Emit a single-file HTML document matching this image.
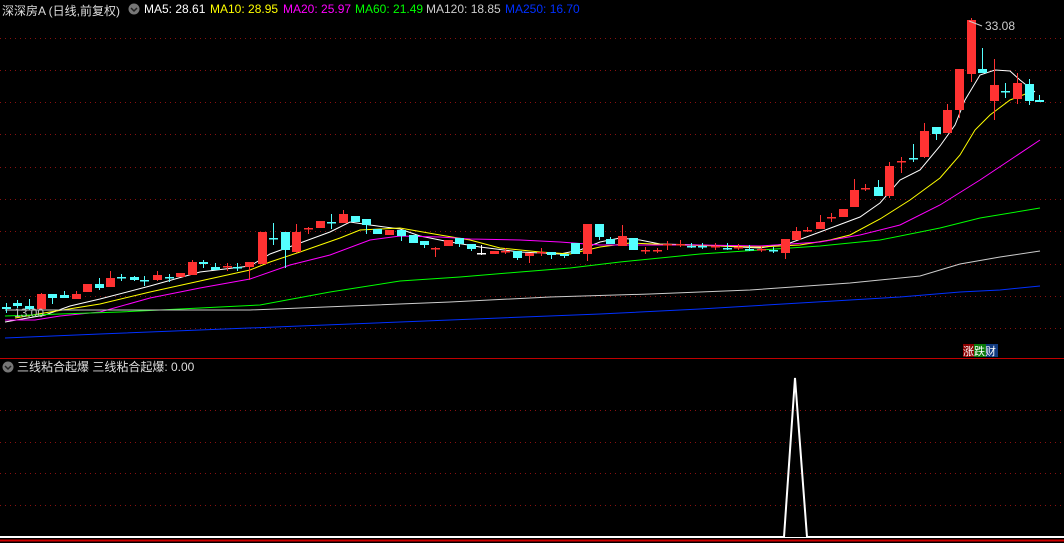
<!DOCTYPE html>
<html><head><meta charset="utf-8"><style>
html,body{margin:0;padding:0;background:#000;width:1064px;height:543px;overflow:hidden}
.t{position:absolute;font:12px "Liberation Sans","Noto Sans CJK SC",sans-serif;white-space:nowrap;top:2px}
</style></head><body>
<svg id="s" width="1064" height="543" style="position:absolute;left:0;top:0" xmlns="http://www.w3.org/2000/svg">
<g stroke="#8a1010" stroke-dasharray="1,4" stroke-width="1">
<line x1="0" y1="38.5" x2="1064" y2="38.5"/><line x1="0" y1="70.5" x2="1064" y2="70.5"/><line x1="0" y1="102.5" x2="1064" y2="102.5"/><line x1="0" y1="134.5" x2="1064" y2="134.5"/><line x1="0" y1="167.5" x2="1064" y2="167.5"/><line x1="0" y1="199.5" x2="1064" y2="199.5"/><line x1="0" y1="231.5" x2="1064" y2="231.5"/><line x1="0" y1="264.5" x2="1064" y2="264.5"/><line x1="0" y1="296.5" x2="1064" y2="296.5"/><line x1="0" y1="328.5" x2="1064" y2="328.5"/>
<line x1="0" y1="410.5" x2="1064" y2="410.5"/><line x1="0" y1="442.5" x2="1064" y2="442.5"/><line x1="0" y1="473.5" x2="1064" y2="473.5"/><line x1="0" y1="505.5" x2="1064" y2="505.5"/>
</g>
<line x1="0" y1="358.5" x2="1064" y2="358.5" stroke="#c00000"/>
<line x1="0" y1="537.5" x2="1064" y2="537.5" stroke="#fff"/>
<line x1="0" y1="540.5" x2="1064" y2="540.5" stroke="#d00000" stroke-width="2"/>
<polyline points="0,537 784,537 795,378 807,537 1064,537" fill="none" stroke="#fff" stroke-width="2"/>
<g id="ma" fill="none" stroke-width="1"></g>
<g id="cd"></g>
<line x1="969" y1="21" x2="982" y2="26" stroke="#ccc"/>
<text x="985" y="30" fill="#ccc" font-family="Liberation Sans" font-size="12">33.08</text>
<text x="14" y="317" fill="#bbb" font-family="Liberation Sans" font-size="12">13.00</text>
<circle cx="134" cy="9" r="5.5" fill="#777"/><path d="M131,8 l3,3 l3,-3" stroke="#222" fill="none" stroke-width="1.5"/>
<circle cx="8" cy="367" r="5.5" fill="#777"/><path d="M5,366 l3,3 l3,-3" stroke="#222" fill="none" stroke-width="1.5"/>
<rect x="963" y="344" width="11" height="13" fill="#8b0000"/><rect x="974" y="344" width="12" height="13" fill="#0a7a0a"/><rect x="986" y="344" width="12" height="13" fill="#103a80"/>
<text x="963" y="355" fill="#fff" font-family="Noto Sans CJK SC" font-size="11">涨跌财</text>
<text x="17" y="371" fill="#ddd" font-family="Liberation Sans,Noto Sans CJK SC" font-size="12">三线粘合起爆  三线粘合起爆: 0.00</text>
</svg>
<div class="t" style="left:2px;color:#ddd">深深房A (日线,前复权)</div>
<div class="t" style="left:144px;color:#fff">MA5: 28.61</div>
<div class="t" style="left:210px;color:#ff0">MA10: 28.95</div>
<div class="t" style="left:283px;color:#f0f">MA20: 25.97</div>
<div class="t" style="left:355px;color:#0f0">MA60: 21.49</div>
<div class="t" style="left:426px;color:#ccc">MA120: 18.85</div>
<div class="t" style="left:505px;color:#0030ff">MA250: 16.70</div>
<script>
var NS="http://www.w3.org/2000/svg";
function el(p,t,a){var e=document.createElementNS(NS,t);for(var k in a)e.setAttribute(k,a[k]);p.appendChild(e);return e;}
var ma=document.getElementById('ma');
var L=[["#fff","5,322 45,315 70,306 100,299 150,286 200,272 250,266 270,254 300,243 330,232 350,222 370,225 400,229 420,236 450,242 480,247 520,252 560,254 580,250 600,242 620,238 640,240 660,244 700,245 760,248 790,243 820,232 860,217 880,203 900,180 920,170 940,146 955,125 965,100 980,75 995,70 1010,71 1020,80 1035,92"],
["#ff0","15,318 50,312 100,304 150,292 200,281 250,270 270,262 300,252 340,238 360,230 400,228 440,235 470,240 500,248 540,252 570,254 600,247 630,243 680,245 760,247 800,245 830,240 850,235 880,219 910,200 940,178 960,155 975,130 990,115 1010,100 1028,93"],
["#f0f","5,320 35,320 60,316 100,312 150,298 200,288 250,279 290,265 330,255 370,240 400,236 440,237 470,239 520,240 560,242 600,245 650,245 700,245 760,246 820,242 860,235 900,225 940,205 980,180 1010,160 1040,140"],
["#0f0","5,316 60,314 120,312 200,308 260,305 330,292 400,281 460,277 520,272 570,268 620,262 700,254 760,250 820,246 880,240 940,228 980,218 1040,208"],
["#ccc","5,310 100,310 250,310 350,306 450,302 550,297 650,294 750,290 850,283 920,276 960,264 1000,257 1040,251"],
["#0030ff","5,338 100,334 200,330 300,326 400,322 500,318 600,314 700,309 800,303 900,297 960,292 1000,290 1040,286"]];
L.forEach(function(l){el(ma,'polyline',{points:l[1],stroke:l[0]});});
var C=[[6,307,309,303,313,'c'],[17,303,306,300,308,'c'],[29,306,309,299,310,'c'],[41,294,309,293,309,'r'],[52,294,298,294,304,'c'],[64,295,298,291,298,'c'],[76,294,299,291,299,'r'],[87,284,292,284,292,'r'],[99,284,288,278,290,'c'],[110,278,287,271,287,'r'],[121,277,278,274,281,'c'],[134,277,280,276,281,'c'],[144,280,281,276,286,'c'],[157,275,280,271,281,'r'],[169,277,278,274,282,'c'],[180,273,277,273,277,'r'],[192,262,275,260,275,'r'],[203,262,264,260,268,'c'],[215,267,270,263,270,'c'],[227,266,267,263,271,'r'],[237,267,268,263,271,'c'],[249,262,267,262,280,'r'],[262,232,264,232,264,'r'],[273,238,239,223,245,'c'],[285,232,250,232,268,'c'],[296,232,252,224,253,'r'],[308,228,229,227,234,'r'],[320,221,228,221,228,'r'],[331,222,223,214,229,'c'],[343,214,223,210,223,'r'],[355,216,222,216,222,'c'],[366,219,225,219,234,'c'],[377,229,234,229,234,'c'],[389,230,235,230,235,'r'],[401,230,236,230,241,'c'],[413,235,243,235,243,'c'],[424,241,245,241,248,'c'],[435,248,249,247,257,'r'],[448,240,246,240,246,'r'],[459,238,244,238,247,'c'],[471,244,249,244,251,'c'],[481,253,254,245,255,'w'],[494,251,254,251,254,'r'],[505,251,252,248,254,'r'],[517,251,258,251,260,'c'],[529,253,256,253,263,'r'],[541,252,253,248,256,'r'],[551,252,255,252,259,'c'],[564,254,256,254,258,'c'],[575,243,254,243,254,'c'],[587,224,254,224,261,'r'],[599,224,237,224,240,'c'],[610,239,244,237,244,'c'],[622,236,246,225,246,'r'],[633,238,250,238,250,'c'],[645,250,251,247,254,'r'],[657,250,251,248,253,'r'],[667,244,245,241,250,'r'],[680,244,245,240,247,'r'],[691,246,247,243,248,'c'],[702,246,247,243,249,'c'],[715,246,247,243,250,'r'],[727,248,249,243,250,'c'],[738,247,248,244,250,'r'],[749,249,250,245,251,'c'],[761,249,250,246,252,'r'],[773,250,251,247,253,'c'],[785,239,253,239,259,'r'],[796,231,240,227,240,'r'],[807,230,231,227,232,'r'],[820,222,229,215,229,'r'],[831,217,218,213,222,'r'],[843,209,217,209,217,'r'],[854,190,207,179,207,'r'],[865,188,189,184,191,'r'],[878,187,196,180,196,'c'],[889,166,196,162,198,'r'],[901,161,162,157,173,'r'],[913,158,159,144,162,'c'],[924,131,157,123,158,'r'],[936,127,134,127,140,'c'],[947,110,133,104,133,'r'],[959,69,110,69,118,'r'],[971,20,74,18,82,'r'],[982,69,73,48,73,'c'],[994,85,101,59,120,'r'],[1005,91,92,83,98,'c'],[1017,83,99,73,104,'r'],[1029,84,101,79,105,'c'],[1039,100,102,95,102,'c']];
var cd=document.getElementById('cd');
var col={r:'#ff3232',c:'#54ffff',w:'#fff'};
C.forEach(function(c){var f=col[c[5]];
el(cd,'line',{x1:c[0]+.5,x2:c[0]+.5,y1:c[3],y2:c[4],stroke:f});
var h=Math.max(c[2]-c[1],1.5);
el(cd,'rect',{x:c[0]-4,y:c[1],width:9,height:h,fill:f});});
</script>
</body></html>
